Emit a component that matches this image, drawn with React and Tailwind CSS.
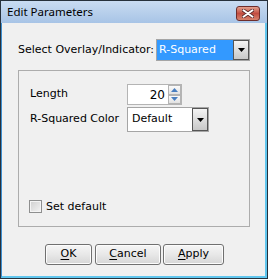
import React from 'react'

const ui = { fontFamily: '"DejaVu Sans", Verdana, sans-serif' }

const DownArrow = () => (
  <svg width="7" height="4" viewBox="0 0 7 4">
    <path d="M0 0 H7 L3.5 4 Z" fill="#000" />
  </svg>
)

const DropButton = ({ className = '' }) => (
  <div
    className={`flex items-center justify-center border border-[#555] bg-gradient-to-b from-[#f4f4f4] to-[#c8c8c8] ${className}`}
  >
    <DownArrow />
  </div>
)

const Spin = ({ up }) => (
  <div className="flex-1 flex items-center justify-center border border-[#b4b4b4] bg-gradient-to-b from-[#fbfbfb] to-[#e2e2e2]">
    <svg width="7" height="4" viewBox="0 0 7 4">
      <path d={up ? 'M0 4 H7 L3.5 0 Z' : 'M0 0 H7 L3.5 4 Z'} fill="#4a7fc0" />
    </svg>
  </div>
)

const Btn = ({ u, rest, w }) => (
  <button
    className={`${w} h-[21px] rounded-[3px] border border-[#707070] bg-gradient-to-b from-[#f6f6f6] via-[#e8e8e8] to-[#d6d6d6] text-[11px] text-black shadow-[inset_0_0_0_1px_#fcfcfc]`}
    style={ui}
  >
    <span className="underline underline-offset-2">{u}</span>
    {rest}
  </button>
)

export default function App() {
  return (
    <div className="w-[268px] h-[279px] border border-[#26313c] flex flex-col bg-[#f0f0f0]">
      {/* title bar */}
      <div className="h-[22px] flex items-center justify-between pl-[6px] pr-[7px] bg-gradient-to-b from-[#c9dcf2] to-[#a8c4e6]">
        <span
          className="text-[11.5px] text-black"
          style={{ fontFamily: '"Noto Sans", "Open Sans", sans-serif' }}
        >
          Edit Parameters
        </span>
        <div className="w-[24px] h-[15px] mt-[2px] rounded-[3px] border border-[#6e2d2b] bg-gradient-to-b from-[#e2a08e] via-[#c24c40] to-[#d6846f] flex items-center justify-center">
          <svg width="12" height="9" viewBox="0 0 12 9">
            <path
              d="M1 1 L11 8 M11 1 L1 8"
              stroke="#5a2a2a"
              strokeWidth="3.6"
              strokeLinecap="round"
            />
            <path
              d="M1.5 1.3 L10.5 7.7 M10.5 1.3 L1.5 7.7"
              stroke="#fff"
              strokeWidth="2"
              strokeLinecap="round"
            />
          </svg>
        </div>
      </div>

      {/* body */}
      <div
        className="flex-1 flex flex-col border-l border-l-[#3d8fd0] border-r-2 border-b-2 border-r-[#60c6ee] border-b-[#60c6ee] text-[11px] text-black"
        style={ui}
      >
        <div className="mt-[16px] ml-[16px] flex items-center h-[22px]">
          <span className="w-[138px] shrink-0">Select Overlay/Indicator:</span>
          <div className="w-[94px] h-[22px] flex border border-[#a5a5a5] bg-white">
            <div className="flex-1 bg-[#3399ff] text-white flex items-center pl-[2px]">
              R-Squared
            </div>
            <DropButton className="w-[16px]" />
          </div>
        </div>

        <div className="mt-[9px] ml-[16px] w-[232px] h-[157px] border border-[#acacac] flex flex-col pl-[11px] pt-[13px] pb-[11px]">
          <div className="flex items-center">
            <span className="w-[97px] shrink-0">Length</span>
            <div className="w-[55px] h-[21px] flex border border-[#b4b4b4] bg-white">
              <div className="flex-1 flex items-center justify-end pr-[3px] text-[12px]">20</div>
              <div className="w-[13px] flex flex-col">
                <Spin up />
                <Spin />
              </div>
            </div>
          </div>
          <div className="flex items-center mt-[2px]">
            <span className="w-[97px] shrink-0">R-Squared Color</span>
            <div className="w-[82px] h-[25px] flex border border-[#a5a5a5] bg-white">
              <div className="flex-1 flex items-center pl-[4px]">Default</div>
              <DropButton className="w-[16px]" />
            </div>
          </div>
          <div className="mt-auto flex items-center gap-[4px] -ml-[1px]">
            <div className="w-[13px] h-[13px] border border-[#8e8f8f] bg-gradient-to-br from-[#cfcfcf] to-[#f4f4f4] shadow-[inset_0_0_0_1px_#f4f4f4]" />
            <span>Set default</span>
          </div>
        </div>

        <div className="mt-[17px] ml-[43px] flex">
          <Btn u="O" rest="K" w="w-[47px]" />
          <div className="w-[3px]" />
          <Btn u="C" rest="ancel" w="w-[66px]" />
          <div className="w-[2px]" />
          <Btn u="A" rest="pply" w="w-[61px]" />
        </div>
      </div>
    </div>
  )
}
